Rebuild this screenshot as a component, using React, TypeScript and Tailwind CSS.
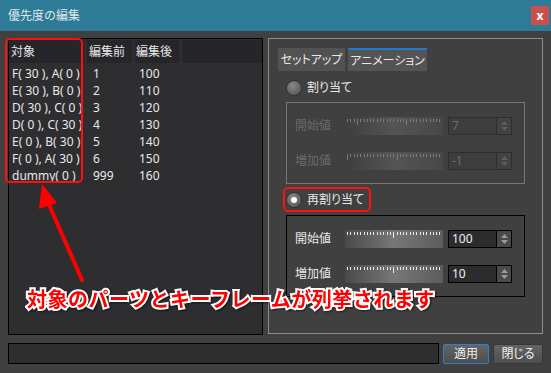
import React from 'react';

const JP = "font-['Noto_Sans','Noto_Sans_CJK_JP',sans-serif]";

const ROWS = [
  ['F( 30 ), A( 0 )', '1', '100'],
  ['E( 30 ), B( 0 )', '2', '110'],
  ['D( 30 ), C( 0 )', '3', '120'],
  ['D( 0 ), C( 30 )', '4', '130'],
  ['E( 0 ), B( 30 )', '5', '140'],
  ['F( 0 ), A( 30 )', '6', '150'],
  ['dummy( 0 )', '999', '160'],
];

// Ruler-like slider with tick marks along the top edge
function Slider({ marks, dim }: { marks: number[]; dim?: boolean }) {
  const ticks = Array.from({ length: 30 }, (_, i) => 2 + i * 3.3);
  return (
    <div
      className={`relative h-[18px] w-[98px] ${
        dim
          ? 'bg-gradient-to-r from-[#3f3f3f] via-[#5a5a5a] to-[#4a4a4a] opacity-80'
          : 'bg-gradient-to-r from-[#4a4a4a] via-[#777] to-[#5c5c5c]'
      }`}
    >
      <svg width="98" height="18" className="absolute inset-0">
        {ticks.map((x) => (
          <rect
            key={x}
            x={Math.round(x)}
            y={2}
            width={1}
            height={marks.some((m) => Math.abs(m - x) < 1.7) ? 6 : 3}
            fill={dim ? '#8a8a8a' : '#e8e8e8'}
          />
        ))}
      </svg>
    </div>
  );
}

function Spin({ value, dim }: { value: string; dim?: boolean }) {
  return (
    <div
      className={`flex h-[18px] w-[64px] border ${
        dim ? 'border-[#2e2e2e] bg-[#3d3d3d] text-[#6e6e6e]' : 'border-black bg-[#2c2c2e] text-[#f0f0f0]'
      }`}
    >
      <span className="flex-1 pl-[3px] text-[12px] leading-[16px]">{value}</span>
      <div className={`flex w-[15px] flex-col items-center justify-center gap-[2px] border-l ${dim ? 'border-[#2e2e2e] bg-[#424242]' : 'border-black bg-[#4a4a4a]'}`}>
        <svg width="7" height="4"><path d="M0 4 L3.5 0 L7 4Z" fill={dim ? '#5e5e5e' : '#9a9a9a'} /></svg>
        <svg width="7" height="4"><path d="M0 0 L3.5 4 L7 0Z" fill={dim ? '#5e5e5e' : '#9a9a9a'} /></svg>
      </div>
    </div>
  );
}

function Radio({ checked }: { checked?: boolean }) {
  return (
    <div className="flex h-[14px] w-[14px] items-center justify-center rounded-full bg-[radial-gradient(circle_at_40%_35%,#8a8a8a,#4a4a4a)] shadow-[0_0_0_1px_#333]">
      {checked && <div className="h-[6px] w-[6px] rounded-full bg-white" />}
    </div>
  );
}

function ValueGroup({ dim, start, inc, startMarks, incMarks }: { dim?: boolean; start: string; inc: string; startMarks: number[]; incMarks: number[] }) {
  return (
    <div className={`ml-[17px] mr-[17px] flex h-[82px] flex-col justify-center gap-[17px] border pl-[8px] ${dim ? 'border-[#777] text-[#6a6a6a]' : 'border-black text-[#e8e8e8]'}`}>
      <div className="flex h-[18px] items-center">
        <span className="w-[50px] text-[12px] leading-[18px]">開始値</span>
        <Slider marks={startMarks} dim={dim} />
        <div className="ml-[5px]"><Spin value={start} dim={dim} /></div>
      </div>
      <div className="flex h-[18px] items-center">
        <span className="w-[50px] text-[12px] leading-[18px]">増加値</span>
        <Slider marks={incMarks} dim={dim} />
        <div className="ml-[5px]"><Spin value={inc} dim={dim} /></div>
      </div>
    </div>
  );
}

export default function App() {
  return (
    <div className={`relative flex h-[373px] w-[551px] flex-col overflow-hidden bg-[#404040] ${JP}`}>
      {/* Title bar */}
      <div className="flex h-[31px] items-center justify-between bg-[#2e7b98] pl-[8px] pr-[2px]">
        <span className="text-[12px] text-[#dfe6ea]">優先度の編集</span>
        <div className="flex h-[19px] w-[18px] items-center justify-center bg-[#c9504f] text-[12px] font-bold leading-none text-white">x</div>
      </div>

      <div className="flex flex-1 gap-[5px] px-[8px] pt-[7px]">
        {/* Item list */}
        <div className="h-[297px] w-[255px] border border-black bg-[#2e2e31] text-[12px] text-[#e8e8e8]">
          <div className="flex h-[24px] gap-[3px] pt-[1px]">
            <div className="flex w-[75px] items-center bg-[#25252a] pl-[2px]">対象</div>
            <div className="flex w-[45px] items-center bg-[#25252a] pl-[2px]">編集前</div>
            <div className="flex w-[44px] items-center bg-[#25252a] pl-[1px]">編集後</div>
            <div className="flex-1 bg-[#25252a]" />
          </div>
          <div className="pt-[2px]">
            {ROWS.map(([target, before, after]) => (
              <div key={target} className="flex h-[17px] items-center whitespace-pre">
                <span className="w-[83px] pl-[3px]">{target}</span>
                <span className="w-[45px] pl-[1px]">{before}</span>
                <span className="pl-[2px]">{after}</span>
              </div>
            ))}
          </div>
        </div>

        {/* Settings panel */}
        <div className="h-[296px] flex-1 border border-[#8c8c8c] pt-[9px] text-[#e8e8e8] [font-feature-settings:'palt']">
          <div className="flex gap-[3px] pl-[9px]">
            <div className="flex h-[23px] w-[67px] items-center justify-center whitespace-nowrap bg-[#525252] text-[12px] leading-none">セットアップ</div>
            <div className="flex h-[23px] w-[79px] items-center justify-center whitespace-nowrap border-t-2 border-[#1d7ad0] bg-[#545454] text-[12px] leading-none">アニメーション</div>
          </div>
          <div className="mt-[10px] flex h-[14px] items-center gap-[6px] pl-[18px] text-[12px] leading-none">
            <Radio />
            <span>割り当て</span>
          </div>
          <div className="mt-[7px]">
            <ValueGroup dim start="7" inc="-1" startMarks={[12, 62]} incMarks={[2, 52]} />
          </div>
          <div className="mt-[9px] flex h-[14px] items-center gap-[6px] pl-[18px] text-[12px] leading-none">
            <Radio checked />
            <span>再割り当て</span>
          </div>
          <div className="mt-[8px]">
            <ValueGroup start="100" inc="10" startMarks={[48.2]} incMarks={[48.2]} />
          </div>
        </div>
      </div>

      {/* Bottom bar */}
      <div className="flex items-center gap-[4px] px-[8px] pb-[9px]">
        <div className="h-[21px] flex-1 border border-black bg-[#2e2e31]" />
        <button className="h-[20px] w-[46px] rounded-[2px] border border-[#2b7fd1] bg-gradient-to-b from-[#646464] to-[#4e4e4e] text-[12px] leading-none text-[#f0f0f0]">適用</button>
        <button className="h-[20px] w-[50px] rounded-[2px] border border-[#383838] bg-gradient-to-b from-[#646464] to-[#4e4e4e] text-[12px] leading-none text-[#f0f0f0] [font-feature-settings:'palt']">閉じる</button>
      </div>

      {/* Annotations */}
      <div className="absolute left-[5px] top-[38px] h-[145px] w-[78px] rounded-[5px] border-2 border-[#ff1010]" />
      <div className="absolute left-[283px] top-[187px] h-[25px] w-[88px] rounded-[5px] border-2 border-[#ff1010]" />
      <svg className="absolute left-0 top-0" width="551" height="373">
        <line x1="82" y1="280" x2="47" y2="200" stroke="#f00" strokeWidth="4" strokeLinecap="round" />
        <path d="M42 184 L57 203 L39 209 Z" fill="#f00" />
      </svg>
      <div className="absolute left-[27px] top-[284px] font-['Noto_Sans_CJK_JP',sans-serif] text-[20px] font-bold leading-[30px] tracking-[0.5px] text-[#ff0000] [paint-order:stroke_fill] [-webkit-text-stroke:4px_white] drop-shadow-[1px_1px_1px_rgba(0,0,0,0.5)]">
        対象のパーツとキーフレームが列挙されます
      </div>
    </div>
  );
}
